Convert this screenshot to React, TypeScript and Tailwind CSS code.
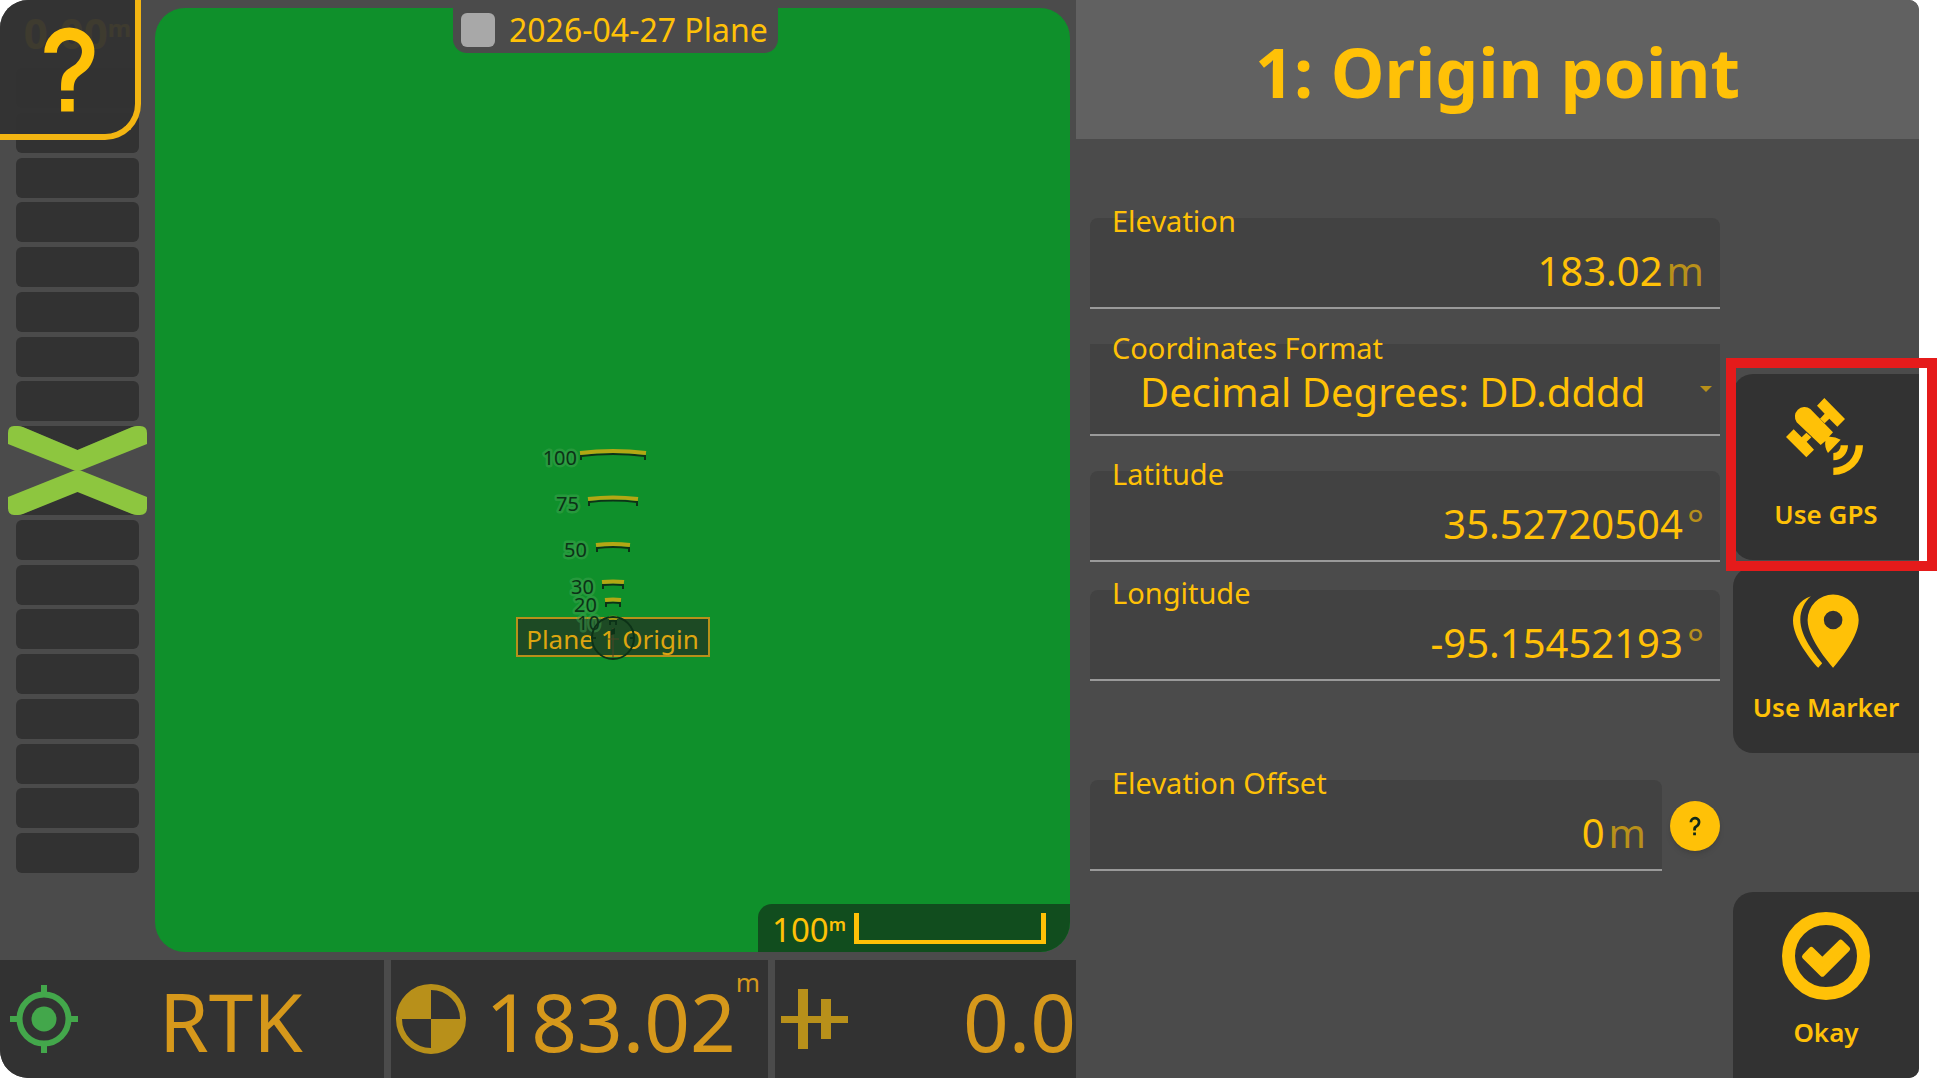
import { useState, type ReactNode } from "react";

const rangeRings = [
  { label: "100", y: 450, half: 32, textX: 576 },
  { label: "75", y: 496, half: 24, textX: 578 },
  { label: "50", y: 542, half: 16, textX: 586 },
  { label: "30", y: 579, half: 10, textX: 593 },
  { label: "20", y: 597, half: 7, textX: 596 },
  { label: "10", y: 615, half: 3, textX: 599 },
];

function QuestionIcon({ className }: { className: string }) {
  return (
    <svg viewBox="0 0 24 24" fill="currentColor" className={className}>
      <path d="M10,19H13V22H10V19M12,2C17.35,2.22 19.68,7.62 16.5,11.67C15.67,12.67 14.33,13.33 13.67,14.17C13,15 13,16 13,17H10C10,15.33 10,13.92 10.67,12.92C11.33,11.92 12.67,11.33 13.5,10.67C15.92,8.43 15.32,5.26 12,5A3,3 0 0,0 9,8H6A6,6 0 0,1 12,2Z" />
    </svg>
  );
}

function SatelliteIcon() {
  return (
    <svg viewBox="261 173 231 231" fill="currentColor" className="mr-1 mb-1 size-[77px]">
      <path d="M334 206L402 276L390 289Q408 288 425 298L387 338Q376 322 379 302L365 314L293 246A29 29 0 0 1 334 206Z" />
      <path d="M376 173L438 236L415 259L391 235L377 249L363 235L377 220L354 196Z" />
      <path d="M284 267L308 291L322 277L337 291L323 304L345 328L322 351L261 290Z" />
      <path d="M425 315H447A44 45 0 0 1 403 360V338A22 22 0 0 0 425 315Z" />
      <path d="M470 315H492A89 89 0 0 1 403 404V382A67 67 0 0 0 470 315Z" />
    </svg>
  );
}

function MarkerIcon() {
  return (
    <svg viewBox="282 762 199 222" fill="currentColor" className="h-[74px] w-[66px]">
      <path
        fillRule="evenodd"
        d="M403 984C403 984 326 899 326 840A77 77 0 0 1 480 840C480 899 403 984 403 984ZM403 812A28 28 0 1 0 403 868A28 28 0 1 0 403 812Z"
      />
      <path d="M336 768C300 780 282 810 282 841C282 895 335 958 358 984L370 970C350 945 304 890 304 838C304 810 318 783 336 768Z" />
    </svg>
  );
}

function OkayIcon() {
  return (
    <svg viewBox="0 0 264 264" className="size-[88px]">
      <circle cx="132" cy="132" r="112.5" fill="none" stroke="currentColor" strokeWidth="39" />
      <path
        d="M88 113L121 145L176 91L196 111L121 186L68 134Z"
        fill="currentColor"
        stroke="currentColor"
        strokeWidth="16"
        strokeLinejoin="round"
      />
    </svg>
  );
}

function ActionButton({ icon, label, className }: { icon: ReactNode; label: string; className: string }) {
  return (
    <button
      type="button"
      className={`flex h-[186px] w-full flex-col items-center bg-[#323232] pt-5 text-[#ffc107] ${className}`}
    >
      <span className="flex h-[88px] items-center">{icon}</span>
      <span className="mt-4 text-[26px] leading-8 font-semibold">{label}</span>
    </button>
  );
}

function Field({ id, label, value, unit }: { id: string; label: string; value: string; unit: string }) {
  const [text, setText] = useState(value);
  return (
    <div className="flex h-[91px] min-w-0 flex-1 flex-col rounded-t-lg border-b-2 border-[#9a9a9a] bg-[#424242]">
      <label htmlFor={id} className="-mt-[13px] ml-[22px] self-start text-[29px] leading-8">
        {label}
      </label>
      <div className="mt-[10px] flex items-center pr-4 text-[40px] leading-[48px]">
        <input
          id={id}
          value={text}
          onChange={(e) => setText(e.target.value)}
          className="h-12 w-0 min-w-0 flex-1 bg-transparent text-right outline-none"
        />
        <span className="ml-1 text-[#b8901a]">{unit}</span>
      </div>
    </div>
  );
}

function StatusCell({ icon, children, className }: { icon: ReactNode; children: ReactNode; className: string }) {
  return (
    <div className={`flex items-center bg-[#323232] text-[#d6981b] ${className}`}>
      {icon}
      {children}
    </div>
  );
}

function ElevationBars() {
  const bars = Array.from({ length: 8 });
  return (
    <div className="flex h-[805px] flex-col items-center justify-between">
      {bars.map((_, i) => (
        <div key={i} className="h-10 w-[123px] rounded-md bg-[#323232]" />
      ))}
      <svg viewBox="0 0 139 89" className="h-[89px] w-[139px]">
        <path d="M12 0H127L69.500 24ZM12 89H127L69.500 65Z" fill="#323232" />
        <g fill="#8dc63f">
          <path d="M6 0H10Q12 0 15 1L69.500 24L124 1Q127 0 129 0H132Q139 0 139 7V18L74 44Q69.500 46 65 44L0 18V7Q0 0 6 0Z" />
          <path d="M6 89H10Q12 89 15 88L69.500 66L124 88Q127 89 129 89H132Q139 89 139 82V71L74 45Q69.500 43 65 45L0 71V82Q0 89 6 89Z" />
        </g>
      </svg>
      {bars.map((_, i) => (
        <div key={i} className="h-10 w-[123px] rounded-md bg-[#323232]" />
      ))}
    </div>
  );
}

function MapView() {
  return (
    <div className="relative mr-[6px] flex-1 overflow-hidden rounded-[30px] bg-[#0f902b]">
      <div className="absolute top-[609px] left-1/2 flex h-10 w-[194px] -translate-x-1/2 items-center justify-center border-2 border-[#b8901a] bg-[#1d4a24] pt-1 text-[26px] whitespace-nowrap text-[#dda510]">
        Plane 1 Origin
      </div>
      <svg viewBox="472 420 280 260" className="absolute top-[412px] left-1/2 h-[260px] w-[280px] -translate-x-1/2">
        {rangeRings.map((r) => (
          <g key={r.label} fill="none">
            <path
              d={`M${612 - r.half} ${r.y + 10}V${r.y + 6}Q612 ${r.y + 6 - r.half / 8} ${612 + r.half} ${r.y + 6}V${r.y + 10}`}
              stroke="#0c3217"
              strokeWidth="2"
            />
            <path
              d={`M${611 - r.half} ${r.y + 3}Q612 ${r.y + 3 - r.half / 8} ${613 + r.half} ${r.y + 3}`}
              stroke="#b3a714"
              strokeWidth="4"
            />
            <text
              x={r.textX}
              y={r.y + 15}
              textAnchor="end"
              fill="#0c3217"
              stroke="#45a552"
              strokeWidth="5"
              strokeOpacity="0.45"
              strokeLinejoin="round"
              paintOrder="stroke"
              fontSize="20"
            >
              {r.label}
            </text>
          </g>
        ))}
        <circle cx="612" cy="638" r="21" fill="none" stroke="#0c3217" strokeWidth="2" />
        <path d="M591 638H595M629 638H633" stroke="#0c3217" strokeWidth="2" />
        <path d="M612 628V658M606 639H618" stroke="#4c4526" strokeWidth="1" />
        <path d="M610 630L614 628V634L610 635Z" fill="#0c3217" />
      </svg>
      <div className="absolute right-0 bottom-0 flex h-12 w-[312px] items-center rounded-tl-[14px] bg-[#114d1e] pl-[14px] text-[#ffc107]">
        <span className="pt-1 text-[33px] leading-10">100</span>
        <span className="-mt-2 text-[18px] leading-6 font-semibold">m</span>
        <span className="mr-6 ml-2 h-[31px] flex-1 border-x-5 border-b-4 border-[#ffc107]" />
      </div>
    </div>
  );
}

export default function App() {
  const [planeOn, setPlaneOn] = useState(false);

  return (
    <div className="min-h-screen bg-white pr-[18px] font-['Noto_Sans','Open_Sans',sans-serif]">
      <div className="flex min-h-screen rounded-l-[28px] rounded-r-[10px] bg-[#4b4b4b] text-[#ffc107]">
        <main className="relative flex min-w-0 flex-[1076] flex-col">
          <div className="flex flex-1 pt-2 pb-2">
            <aside className="flex w-[155px] flex-col items-center">
              <div className="flex h-[60px] items-start text-[42px] leading-[50px] font-bold text-[#ffc107]">
                0.00<span className="text-[24px] leading-10">m</span>
              </div>
              <ElevationBars />
            </aside>
            <MapView />
          </div>
          <footer className="flex h-[118px] gap-[7px]">
            <StatusCell
              className="w-[384px] rounded-bl-[28px] pl-[10px]"
              icon={
                <svg viewBox="0 0 68 68" fill="none" stroke="#43a74b" strokeWidth="6" className="size-[68px] shrink-0">
                  <circle cx="34" cy="34" r="24.5" />
                  <path d="M34 0V8M34 60V68M0 34H8M60 34H68" />
                  <circle cx="34" cy="34" r="12.500" fill="#43a74b" stroke="none" />
                </svg>
              }
            >
              <span className="flex-1 pt-1 text-center text-[80px] leading-none">RTK</span>
            </StatusCell>
            <StatusCell
              className="w-[377px] pl-[5px]"
              icon={
                <svg viewBox="0 0 70 70" className="size-[70px] shrink-0 text-[#b8901a]">
                  <circle cx="35" cy="35" r="32" fill="none" stroke="currentColor" strokeWidth="6" />
                  <path d="M35 35V2A33 33 0 0 0 2 35ZM35 35V68A33 33 0 0 0 68 35Z" fill="currentColor" />
                </svg>
              }
            >
              <span className="flex-1 pt-1 text-right text-[80px] leading-none">183.02</span>
              <span className="mr-2 self-start pt-[6px] text-[26px] leading-8">m</span>
            </StatusCell>
            <StatusCell
              className="min-w-0 flex-1 pl-[6px]"
              icon={
                <svg viewBox="0 0 67 60" fill="#b8901a" className="h-[60px] w-[67px] shrink-0">
                  <path d="M0 27H67V34H0ZM17 0H27V60H17ZM40 10H50V50H40Z" />
                </svg>
              }
            >
              <span className="flex-1 pt-1 text-right text-[80px] leading-none">0.0</span>
            </StatusCell>
          </footer>

          <button
            type="button"
            aria-label="Help"
            className="absolute top-0 left-0 flex h-[140px] w-[141px] items-center justify-center rounded-tl-[28px] rounded-br-[36px] border-r-6 border-b-6 border-[#f3b512] bg-[#323232]/94 pt-1 pl-1"
          >
            <QuestionIcon className="size-[101px]" />
          </button>
          <label className="absolute top-0 left-[453px] flex h-[53px] w-[325px] items-center rounded-b-[14px] bg-[#4b4b4b] pt-[6px] pl-2 text-[32px] leading-10 whitespace-nowrap">
            <input
              type="checkbox"
              checked={planeOn}
              onChange={(e) => setPlaneOn(e.target.checked)}
              className="mr-[14px] size-[34px] shrink-0 appearance-none rounded-md bg-[#a8a8a8] checked:bg-[#ffc107]"
            />
            2026-04-27 Plane
          </label>
        </main>

        <section className="flex min-w-0 flex-[843] flex-col">
          <header className="flex h-[139px] items-center justify-center rounded-tr-[10px] bg-[#616161] pt-1">
            <h1 className="text-[68px] leading-none font-bold">1: Origin point</h1>
          </header>
          <div className="flex flex-1">
            <form className="flex min-w-0 flex-1 flex-col pt-[79px] pr-[13px] pl-[14px]">
              <div className="flex">
                <Field id="elevation" label="Elevation" value="183.02" unit="m" />
              </div>
              <div className="relative mt-[35px] flex h-[92px] flex-col border-b-2 border-[#9a9a9a] bg-[#424242]">
                <label htmlFor="format" className="-mt-3 ml-[22px] self-start text-[29px] leading-8">
                  Coordinates Format
                </label>
                <select
                  id="format"
                  className="h-14 w-full appearance-none bg-transparent pl-[50px] text-[40px] leading-[56px] outline-none"
                >
                  <option>Decimal Degrees: DD.dddd</option>
                </select>
                <svg viewBox="0 0 12 6" className="pointer-events-none absolute top-[42px] right-2 h-[6px] w-3">
                  <path d="M0 0H12L6 6Z" fill="#b8901a" />
                </svg>
              </div>
              <div className="mt-[35px] flex">
                <Field id="latitude" label="Latitude" value="35.52720504" unit="°" />
              </div>
              <div className="mt-7 flex">
                <Field id="longitude" label="Longitude" value="-95.15452193" unit="°" />
              </div>
              <div className="mt-[99px] flex items-center gap-2">
                <Field id="offset" label="Elevation Offset" value="0" unit="m" />
                <button
                  type="button"
                  aria-label="About elevation offset"
                  className="flex size-[50px] shrink-0 items-center justify-center rounded-full bg-[#ffc107] text-[#10281a] shadow-md"
                >
                  <QuestionIcon className="size-[22px]" />
                </button>
              </div>
            </form>
            <nav className="flex w-[186px] shrink-0 flex-col pt-[235px]">
              <div className="relative">
                <ActionButton icon={<SatelliteIcon />} label="Use GPS" className="rounded-l-[20px]" />
                <div className="pointer-events-none absolute -top-4 -right-[18px] -bottom-[11px] -left-[7px] z-10 border-10 border-[#e51b1b]" />
              </div>
              <div className="mt-[7px]">
                <ActionButton icon={<MarkerIcon />} label="Use Marker" className="rounded-l-[20px]" />
              </div>
              <div className="mt-auto">
                <ActionButton icon={<OkayIcon />} label="Okay" className="rounded-tl-[20px] rounded-br-[10px]" />
              </div>
            </nav>
          </div>
        </section>
      </div>
    </div>
  );
}
